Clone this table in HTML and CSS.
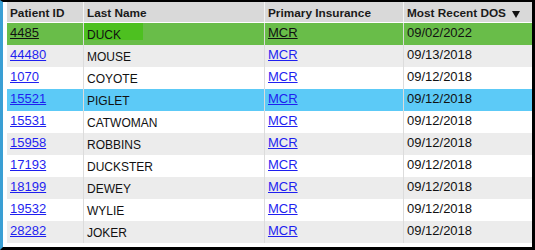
FILE: index.html
```html
<!DOCTYPE html>
<html>
<head>
<meta charset="utf-8">
<link rel="stylesheet" href="styles.css">
</head>
<body>
<div class="frame">
  <div class="row head">
    <div class="cell">Patient ID</div>
    <div class="cell">Last Name</div>
    <div class="cell">Primary Insurance</div>
    <div class="cell">Most Recent DOS<svg class="sort" width="8" height="7" viewBox="0 0 8 7"><path d="M0 0H8L4 7Z"/></svg></div>
  </div>
  <div class="body">
    <div class="row sel"><div class="cell"><a href="#">4485</a></div><div class="cell name patch-duck">DUCK</div><div class="cell"><a href="#">MCR</a></div><div class="cell">09/02/2022</div></div>
    <div class="row"><div class="cell"><a href="#">44480</a></div><div class="cell name">MOUSE</div><div class="cell"><a href="#">MCR</a></div><div class="cell">09/13/2018</div></div>
    <div class="row"><div class="cell"><a href="#">1070</a></div><div class="cell name">COYOTE</div><div class="cell"><a href="#">MCR</a></div><div class="cell">09/12/2018</div></div>
    <div class="row hl"><div class="cell"><a href="#">15521</a></div><div class="cell name">PIGLET</div><div class="cell"><a href="#">MCR</a></div><div class="cell">09/12/2018</div></div>
    <div class="row"><div class="cell"><a href="#">15531</a></div><div class="cell name">CATWOMAN</div><div class="cell"><a href="#">MCR</a></div><div class="cell">09/12/2018</div></div>
    <div class="row"><div class="cell"><a href="#">15958</a></div><div class="cell name">ROBBINS</div><div class="cell"><a href="#">MCR</a></div><div class="cell">09/12/2018</div></div>
    <div class="row"><div class="cell"><a href="#">17193</a></div><div class="cell name">DUCKSTER</div><div class="cell"><a href="#">MCR</a></div><div class="cell">09/12/2018</div></div>
    <div class="row"><div class="cell"><a href="#">18199</a></div><div class="cell name">DEWEY</div><div class="cell"><a href="#">MCR</a></div><div class="cell">09/12/2018</div></div>
    <div class="row"><div class="cell"><a href="#">19532</a></div><div class="cell name">WYLIE</div><div class="cell"><a href="#">MCR</a></div><div class="cell">09/12/2018</div></div>
    <div class="row"><div class="cell"><a href="#">28282</a></div><div class="cell name">JOKER</div><div class="cell"><a href="#">MCR</a></div><div class="cell">09/12/2018</div></div>
  </div>
</div>
</body>
</html>
```
FILE: styles.css
```css
html, body {
  margin: 0;
  padding: 0;
  background: #fff;
}
body {
  width: 535px;
  height: 250px;
  overflow: hidden;
}
.frame {
  box-sizing: border-box;
  width: 535px;
  height: 250px;
  border-top: 2px solid #000;
  border-right: 3px solid #000;
  border-bottom: 3px solid #000;
  border-left: 3px solid #3a9fd4;
  padding-left: 4px;
  background: #fff;
  font-family: "Liberation Sans", Arial, sans-serif;
  color: #111;
}
.row {
  display: grid;
  grid-template-columns: 76px 181px 139px 129px;
  height: 22px;
}
.cell {
  box-sizing: border-box;
  padding-left: 3px;
  white-space: nowrap;
  overflow: hidden;
  font-size: 13px;
  line-height: 20px;
}
.cell + .cell {
  border-left: 1px solid #dcdcdc;
}
.head {
  box-sizing: border-box;
  height: 21px;
  background: #d9d9d9;
  border-bottom: 1px solid #fff;
}
.head .cell {
  font-size: 11.8px;
  font-weight: bold;
  line-height: 19px;
  padding-top: 2px;
  color: #1a1a1a;
}
.head .cell + .cell {
  border-left-color: #f4f4f4;
}
.sort {
  margin-left: 6px;
  vertical-align: -1px;
  fill: #111;
}
.body .row:nth-child(even) {
  background: #ececec;
}
.cell.name {
  font-size: 12px;
  padding-top: 2px;
  line-height: 20px;
}
a {
  color: #1f1ff0;
  text-decoration: underline;
}
.body .row.sel {
  background: #69bd49;
}
.row.sel a {
  color: #111;
}
.body .row.hl {
  background: #5ccaf7;
}
.patch-duck {
  background: linear-gradient(#4dc020, #4dc020) no-repeat 0 0 / 59px 17px;
}
```
